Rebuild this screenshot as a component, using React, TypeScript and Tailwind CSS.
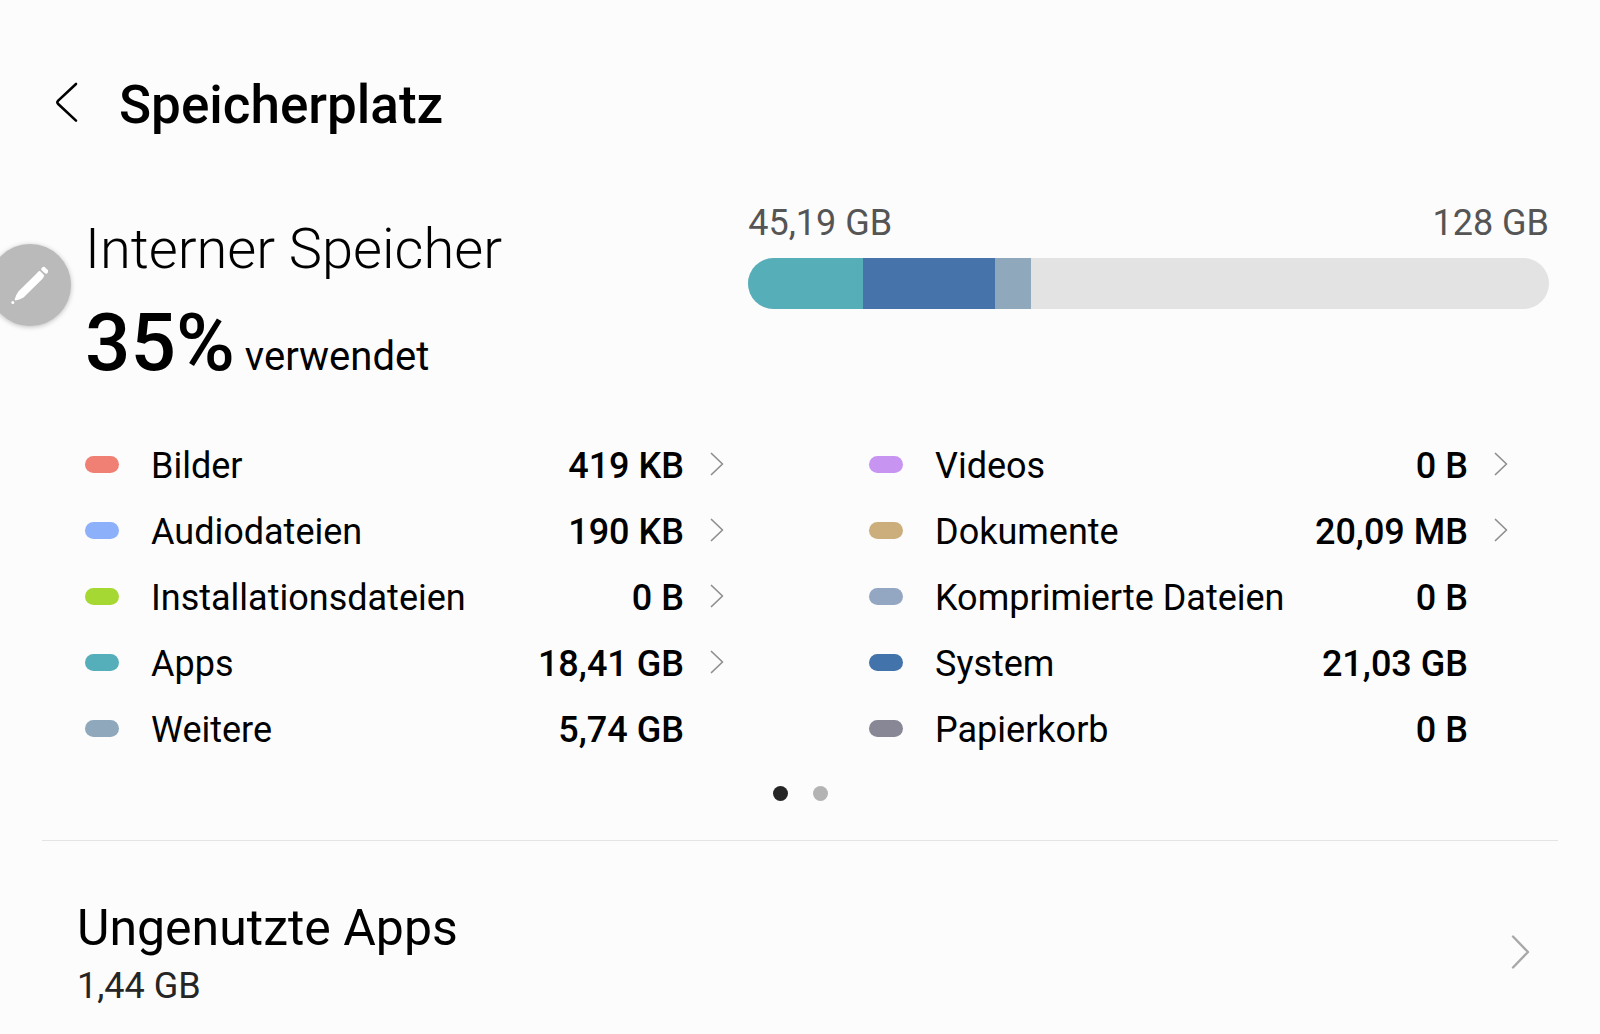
import React from 'react';

type Category = {
  name: string;
  size: string;
  color: string;
  link?: boolean;
};

const TOTAL_GB = 128;

const usage = [
  { name: 'Apps', gb: 18.41, color: 'bg-[#56aeb8]' },
  { name: 'System', gb: 21.03, color: 'bg-[#4673a9]' },
  { name: 'Weitere', gb: 5.74, color: 'bg-[#8fa8bc]' },
];

const leftColumn: Category[] = [
  { name: 'Bilder', size: '419 KB', color: 'bg-[#f08074]', link: true },
  { name: 'Audiodateien', size: '190 KB', color: 'bg-[#8cb0fa]', link: true },
  { name: 'Installationsdateien', size: '0 B', color: 'bg-[#a6d833]', link: true },
  { name: 'Apps', size: '18,41 GB', color: 'bg-[#55afba]', link: true },
  { name: 'Weitere', size: '5,74 GB', color: 'bg-[#8fa8bc]' },
];

const rightColumn: Category[] = [
  { name: 'Videos', size: '0 B', color: 'bg-[#c794f2]', link: true },
  { name: 'Dokumente', size: '20,09 MB', color: 'bg-[#ccae7c]', link: true },
  { name: 'Komprimierte Dateien', size: '0 B', color: 'bg-[#93a7c3]' },
  { name: 'System', size: '21,03 GB', color: 'bg-[#4273ab]' },
  { name: 'Papierkorb', size: '0 B', color: 'bg-[#878796]' },
];

function CategoryRow({ item }: { item: Category }) {
  const content = (
    <>
      <span className={`h-[17px] w-[34px] shrink-0 rounded-full ${item.color}`} />
      <span className="ml-8 flex-1 pt-1">{item.name}</span>
      <span className="pt-1 font-medium">{item.size}</span>
      <span className="flex w-[44px] shrink-0 justify-end pr-1">
        {item.link && (
          <svg width="14" height="24" viewBox="0 0 14 24" fill="none" stroke="#8f8f8f" strokeWidth="1.7" strokeLinecap="round" strokeLinejoin="round">
            <path d="M1.5 1.5 12.5 12 1.5 22.5" />
          </svg>
        )}
      </span>
    </>
  );

  return (
    <li>
      {item.link ? (
        <button type="button" className="flex h-[66px] w-full items-center text-left">{content}</button>
      ) : (
        <div className="flex h-[66px] items-center">{content}</div>
      )}
    </li>
  );
}

function App() {
  return (
    <div className="relative min-h-screen overflow-hidden bg-[#fcfcfc] font-[Roboto,sans-serif] text-black">
      <header className="flex items-center pt-[73px] pl-[54px]">
        <button type="button" aria-label="Zurück" className="pr-10 pb-1">
          <svg width="25" height="42" viewBox="0 0 25 42" fill="none" stroke="#000" strokeWidth="2.6" strokeLinecap="round" strokeLinejoin="round">
            <path d="M22 2 4.2 18.6Q2.4 20.3 4.2 22L22 38.6" />
          </svg>
        </button>
        <h1 className="text-[53px] leading-[64px] font-medium">Speicherplatz</h1>
      </header>

      {/* Summary */}
      <section className="flex pt-[62px] pr-[51px] pl-[85px]">
        <div className="flex-1 pt-[18px]">
          <h2 className="text-[56px] leading-[64px] font-light">Interner Speicher</h2>
          <p className="mt-[14px] text-[40px] leading-[40px]">
            <span className="text-[80px] leading-[96px] font-medium">35%</span>
            <span className="ml-[10px]">verwendet</span>
          </p>
        </div>
        <div className="w-[54.7%]">
          <div className="flex justify-between text-4xl leading-[48px] text-[#555]">
            <span>45,19 GB</span>
            <span>128 GB</span>
          </div>
          <div className="mt-[11px] flex h-[51px] overflow-hidden rounded-full bg-[#e3e3e3]">
            {usage.map((u) => (
              <div key={u.name} className={u.color} style={{ width: `${(u.gb / TOTAL_GB) * 100}%` }} />
            ))}
          </div>
        </div>
      </section>

      {/* Categories */}
      <section className="grid grid-cols-2 gap-[141px] pt-10 pr-[88px] pl-[85px] text-4xl leading-[48px]">
        <ul>
          {leftColumn.map((item) => <CategoryRow key={item.name} item={item} />)}
        </ul>
        <ul>
          {rightColumn.map((item) => <CategoryRow key={item.name} item={item} />)}
        </ul>
      </section>

      <div className="flex justify-center gap-[25px] pt-[25px]">
        <button type="button" aria-label="Seite 1" className="size-[15px] rounded-full bg-[#252525]" />
        <button type="button" aria-label="Seite 2" className="size-[15px] rounded-full bg-[#b3b3b3]" />
      </div>

      <hr className="mx-[42px] mt-[39px] border-[#e4e4e4]" />

      {/* Unused apps */}
      <button type="button" className="flex w-full items-center justify-between pt-[57px] pr-[70px] pb-6 pl-[77px] text-left">
        <span>
          <span className="block text-[50px] leading-[60px]">Ungenutzte Apps</span>
          <span className="mt-1 block text-4xl leading-[48px] text-[#252525]">1,44 GB</span>
        </span>
        <svg className="mb-1" width="19" height="36" viewBox="0 0 19 36" fill="none" stroke="#a8a8a8" strokeWidth="2.4" strokeLinecap="round" strokeLinejoin="round">
          <path d="M2 2.5 17 18 2 33.5" />
        </svg>
      </button>

      {/* Floating pen handle at the screen edge */}
      <button type="button" aria-label="Stiftmenü" className="absolute top-[244px] -left-[11px] size-[82px] rounded-full bg-[#bababa] shadow-[0_1px_5px_rgba(0,0,0,0.25)]">
        <svg width="82" height="82" viewBox="-11 0 82 82" fill="#fff">
          <path d="M39.8 26.8 44.2 31.2Q44 33.4 42.3 35L23.5 53.4Q20.2 55.4 15.6 56.6 14.6 56.2 14.7 55.2 16 50.8 18.4 47.6L36.6 29.4Q38 27.4 39.8 26.8Z" />
          <path d="M41.3 24.6Q42.6 22.2 44.4 22.8L48 26.3Q48.7 28.4 46.8 29.8Q45.6 30 44.6 29L41.6 26.2Q41 25.4 41.3 24.6Z" />
          <circle cx="12.8" cy="58.4" r="1.5" />
        </svg>
      </button>
    </div>
  );
}

export default App;
